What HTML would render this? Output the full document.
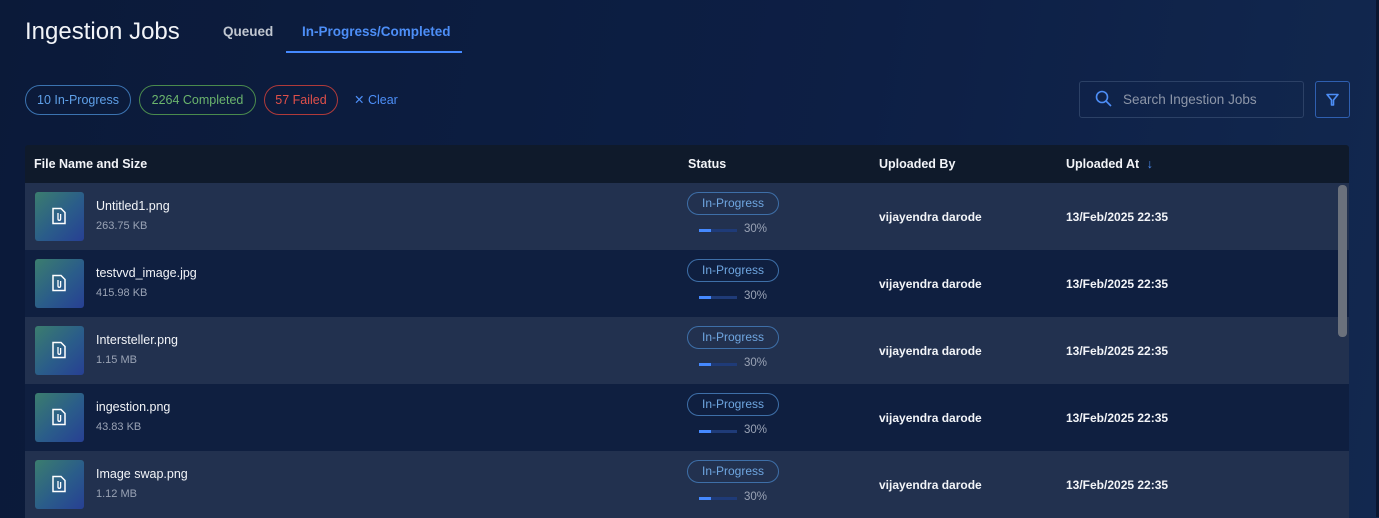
<!DOCTYPE html>
<html><head><style>
*{margin:0;padding:0;box-sizing:border-box}
body{width:1379px;height:517px;overflow:hidden;background:linear-gradient(100deg,#0b1a39 0%,#0d1f45 60%,#12284f 100%);font-family:"Liberation Sans",sans-serif;color:#fff;position:relative}
.abs{position:absolute}
h1{position:absolute;left:25px;top:18px;font-size:24px;font-weight:normal;color:#f2f4f8}
.tab{position:absolute;top:24px;font-size:13.5px;font-weight:bold}
.pill{position:absolute;top:85px;height:30px;border:1px solid;border-radius:15px;font-size:12.5px;line-height:28px;text-align:center}
.th{position:absolute;top:157px;font-size:12.5px;font-weight:bold;color:#f2f4f8}
.row{position:absolute;left:25px;width:1324px;height:67px}
.icon{position:absolute;left:10px;top:9px;width:49px;height:49px;border-radius:3px;background:linear-gradient(135deg,#3b7d6e,#2a5c8a 55%,#273f93)}
.fn{position:absolute;left:71px;top:16px;font-size:12.5px;color:#f2f4f8}
.fs{position:absolute;left:71px;top:37px;font-size:11px;color:#9aa3b5}
.st{position:absolute;left:662px;top:9px;width:92px;height:23px;border:1px solid #3e6fa8;border-radius:12px;font-size:12px;color:#6fa6e0;text-align:center;line-height:21px}
.bar{position:absolute;left:674px;top:46px;width:38px;height:3px;background:#1f3b78}
.bar i{display:block;width:12px;height:3px;background:#4589ff}
.pc{position:absolute;left:719px;top:40px;font-size:11.5px;color:#9aa3b5}
.ub{position:absolute;left:854px;top:27px;font-size:12px;font-weight:bold;color:#f2f4f8}
.ua{position:absolute;left:1041px;top:27px;font-size:12px;font-weight:bold;color:#f2f4f8}
</style></head><body>
<div class="abs" style="left:1376px;top:0;width:3px;height:517px;background:#0b1630"></div>
<h1>Ingestion Jobs</h1>
<div class="tab" style="left:223px;color:#c1c7d0">Queued</div>
<div class="tab" style="left:302px;color:#4d8ef7">In-Progress/Completed</div>
<div class="abs" style="left:286px;top:51px;width:176px;height:2px;background:#4589ff"></div>
<div class="pill" style="left:25px;width:106px;border-color:#3b73b0;color:#5fa0e8">10 In-Progress</div>
<div class="pill" style="left:139px;width:117px;border-color:#4a8a4d;color:#6bb46d">2264 Completed</div>
<div class="pill" style="left:264px;width:74px;border-color:#b03a3a;color:#e0504a">57 Failed</div>
<div class="abs" style="left:354px;top:92px;font-size:12.5px;color:#4d8ef7">✕ Clear</div>
<div class="abs" style="left:1079px;top:81px;width:225px;height:37px;border:1px solid #2c4166;border-radius:3px"></div>
<svg class="abs" style="left:1095px;top:90px" width="18" height="18" viewBox="0 0 18 18"><circle cx="7" cy="7" r="5.5" fill="none" stroke="#4d8ef7" stroke-width="1.6"/><path d="M11 11l5 5" stroke="#4d8ef7" stroke-width="1.6"/></svg>
<div class="abs" style="left:1123px;top:92px;font-size:13.5px;color:#8d96a8">Search Ingestion Jobs</div>
<div class="abs" style="left:1315px;top:81px;width:35px;height:37px;border:1px solid #2f5fb0;border-radius:3px"></div>
<svg class="abs" style="left:1325px;top:92px" width="15" height="15" viewBox="0 0 15 15"><path d="M2 2.5h11L8.5 8v5h-2V8z" fill="none" stroke="#4d8ef7" stroke-width="1.6" stroke-linejoin="round"/></svg>
<div class="abs" style="left:25px;top:145px;width:1324px;height:38px;background:#0f1a2b;border-radius:3px 3px 0 0"></div>
<div class="th" style="left:34px">File Name and Size</div>
<div class="th" style="left:688px">Status</div>
<div class="th" style="left:879px">Uploaded By</div>
<div class="th" style="left:1066px">Uploaded At <span style="color:#4d8ef7;font-weight:normal;margin-left:4px">↓</span></div>

<div class="row" style="top:183px;background:#22314f"><div class="icon"></div><div class="fn">Untitled1.png</div><div class="fs">263.75 KB</div><div class="st">In-Progress</div><div class="bar"><i></i></div><div class="pc">30%</div><div class="ub">vijayendra darode</div><div class="ua">13/Feb/2025 22:35</div></div>
<div class="row" style="top:250px;background:#0f1f40"><div class="icon"></div><div class="fn">testvvd_image.jpg</div><div class="fs">415.98 KB</div><div class="st">In-Progress</div><div class="bar"><i></i></div><div class="pc">30%</div><div class="ub">vijayendra darode</div><div class="ua">13/Feb/2025 22:35</div></div>
<div class="row" style="top:317px;background:#22314f"><div class="icon"></div><div class="fn">Intersteller.png</div><div class="fs">1.15 MB</div><div class="st">In-Progress</div><div class="bar"><i></i></div><div class="pc">30%</div><div class="ub">vijayendra darode</div><div class="ua">13/Feb/2025 22:35</div></div>
<div class="row" style="top:384px;background:#0f1f40"><div class="icon"></div><div class="fn">ingestion.png</div><div class="fs">43.83 KB</div><div class="st">In-Progress</div><div class="bar"><i></i></div><div class="pc">30%</div><div class="ub">vijayendra darode</div><div class="ua">13/Feb/2025 22:35</div></div>
<div class="row" style="top:451px;background:#22314f"><div class="icon"></div><div class="fn">Image swap.png</div><div class="fs">1.12 MB</div><div class="st">In-Progress</div><div class="bar"><i></i></div><div class="pc">30%</div><div class="ub">vijayendra darode</div><div class="ua">13/Feb/2025 22:35</div></div>
<div class="abs" style="left:1338px;top:185px;width:9px;height:152px;border-radius:4px;background:#6b717c"></div>
<svg width="0" height="0" style="position:absolute"><defs><symbol id="f" viewBox="0 0 16 18"><path d="M2 1.5h8l4 4v11H2z" fill="none" stroke="#fff" stroke-width="1.5"/><path d="M7 6v6a1.3 1.3 0 0 0 2.6 0V7" fill="none" stroke="#fff" stroke-width="1.3"/></symbol></defs></svg>
<svg class="abs" style="left:51px;top:207px" width="16" height="18"><use href="#f"/></svg>
<svg class="abs" style="left:51px;top:274px" width="16" height="18"><use href="#f"/></svg>
<svg class="abs" style="left:51px;top:341px" width="16" height="18"><use href="#f"/></svg>
<svg class="abs" style="left:51px;top:408px" width="16" height="18"><use href="#f"/></svg>
<svg class="abs" style="left:51px;top:475px" width="16" height="18"><use href="#f"/></svg>
</body></html>
